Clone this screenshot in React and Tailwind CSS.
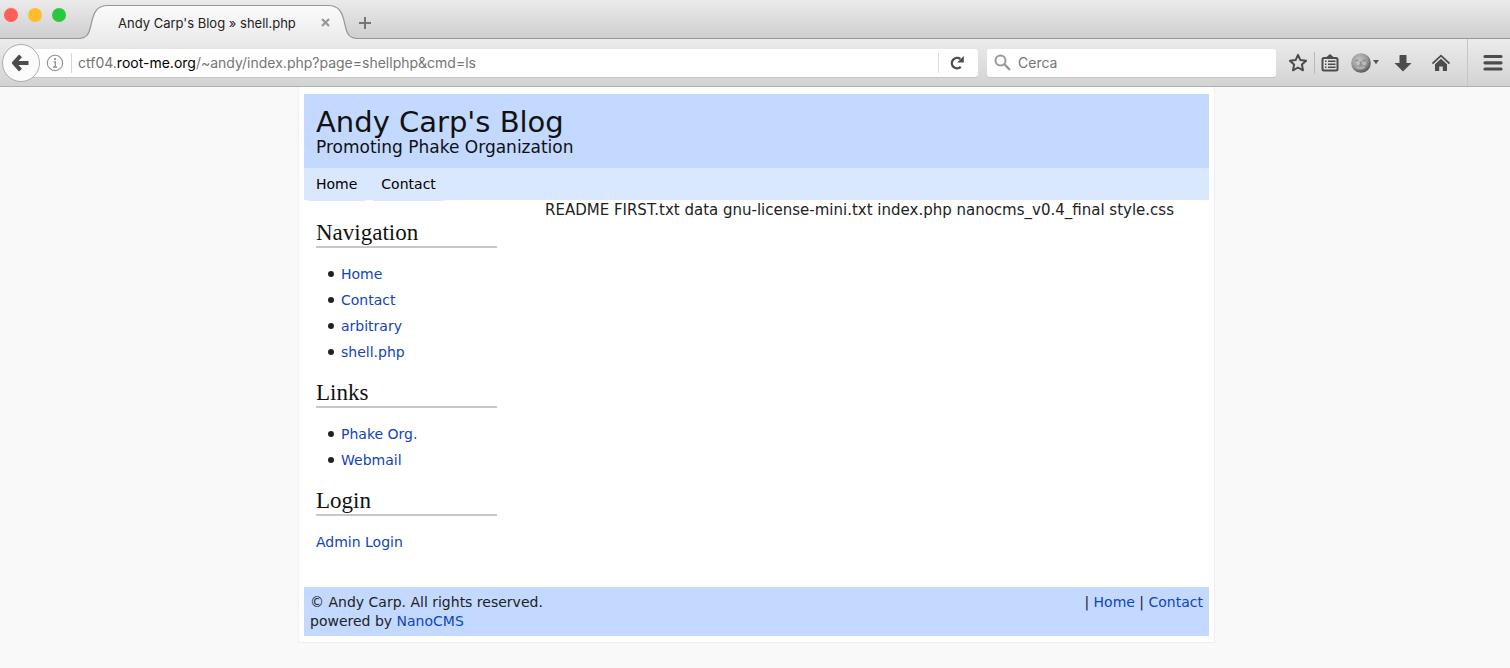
import React from "react";

const blogLink = "text-[#1144bb] hover:underline";

function TabStrip() {
  return (
    <div className="relative flex h-[39px] items-end border-b border-[#979797] bg-gradient-to-b from-[#ebebeb] to-[#cfcfcf]">
      <div className="flex h-full w-[78px] gap-[10px] pl-1 pt-2">
        <button aria-label="Close window" className="size-[14px] rounded-full bg-[#ff5f57]" />
        <button aria-label="Minimize window" className="size-[14px] rounded-full bg-[#ffbd2e]" />
        <button aria-label="Zoom window" className="size-[14px] rounded-full bg-[#28c940]" />
      </div>
      <div className="relative -mb-px flex h-[35px] w-[280px] items-center pl-[40px] pr-[23px] pt-[2px]">
        <svg className="absolute left-0 top-0" width="280" height="35" viewBox="0 0 280 35" aria-hidden="true">
          <defs>
            <linearGradient id="tabFill" x1="0" y1="0" x2="0" y2="1">
              <stop offset="0" stopColor="#fbfbfb" />
              <stop offset="1" stopColor="#ececec" />
            </linearGradient>
          </defs>
          <path
            d="M0 34.5C9 34.5 11 30 13 21C15.500 8 19 1.500 30 1.500H250C261 1.500 264.500 8 267 21C269 30 271 34.500 280 34.500V35H0Z"
            fill="url(#tabFill)"
          />
          <path
            d="M0 34.5C9 34.5 11 30 13 21C15.500 8 19 1.500 30 1.500H250C261 1.500 264.500 8 267 21C269 30 271 34.500 280 34.500"
            fill="none"
            stroke="#979797"
            strokeWidth="1.2"
          />
        </svg>
        <span className="relative flex-1 whitespace-nowrap text-[13px] leading-5 text-[#222]">
          Andy Carp's Blog » shell.php
        </span>
        <button aria-label="Close tab" className="relative p-1">
          <svg width="11" height="11" viewBox="0 0 11 11">
            <path d="M2 2L9 9M9 2L2 9" stroke="#979797" strokeWidth="2.2" />
          </svg>
        </button>
      </div>
      <button aria-label="New tab" className="mb-2">
        <svg width="14" height="14" viewBox="0 0 14 14">
          <path d="M7 1V13M1 7H13" stroke="#757575" strokeWidth="2" />
        </svg>
      </button>
    </div>
  );
}

function Toolbar() {
  return (
    <div className="flex h-12 items-center border-b border-[#b0b0b0] bg-gradient-to-b from-[#ececec] to-[#d3d3d3] pl-[2px]">
      <button
        aria-label="Back"
        className="z-10 flex size-[38px] shrink-0 items-center justify-center rounded-full border border-[#adadad] bg-[#fbfbfb]"
      >
        <svg width="18" height="18" viewBox="0 0 18 18">
          <path d="M8.500 1.800L2 9L8.500 16.200M2.500 9H16.500" fill="none" stroke="#4c4c4c" strokeWidth="4" strokeLinejoin="round" />
        </svg>
      </button>
      <div className="-ml-2 flex h-7 flex-1 items-center rounded-r-[3px] bg-white pl-[14px] shadow-[0_1px_0_#c4c4c4]">
        <button aria-label="Site information">
          <svg width="18" height="18" viewBox="0 0 18 18">
            <circle cx="9" cy="9" r="7.700" fill="none" stroke="#919191" strokeWidth="1.100" />
            <path d="M7.500 7.800H9.300V13M7 13H11.200" fill="none" stroke="#919191" strokeWidth="1.300" />
            <circle cx="9" cy="5.200" r="1.100" fill="#919191" />
          </svg>
        </button>
        <div className="ml-[7px] h-5 w-px bg-[#d5d5d5]" />
        <a href="#address" aria-label="Address" className="ml-[6px] flex-1 whitespace-nowrap text-[14px] leading-5 text-[#757575]">
          ctf04.<span className="text-black">root-me.org</span>/~andy/index.php?page=shellphp&amp;cmd=ls
        </a>
        <div className="h-5 w-px bg-[#dcdcdc]" />
        <button aria-label="Reload" className="flex w-[39px] justify-center pr-[3px]">
          <svg width="16" height="16" viewBox="0 0 16 16">
            <path d="M11.700 11.800A5.200 5.200 0 1 1 11.300 4" fill="none" stroke="#4c4c4c" strokeWidth="2.400" />
            <path d="M14.800 1V7.600H8.200Z" fill="#4c4c4c" />
          </svg>
        </button>
      </div>
      <label className="ml-[9px] flex h-7 w-[289px] items-center gap-[7px] rounded-[3px] bg-white pl-[7px] shadow-[0_1px_0_#c4c4c4]">
        <svg width="17" height="17" viewBox="0 0 17 17" aria-hidden="true">
          <circle cx="6.500" cy="6.500" r="5" fill="none" stroke="#999" strokeWidth="2" />
          <path d="M10.200 10.200L16 16" stroke="#999" strokeWidth="2.400" />
        </svg>
        <input
          aria-label="Search"
          className="h-7 min-w-0 flex-1 text-[14px] outline-none placeholder:text-[#757575]"
          placeholder="Cerca"
        />
      </label>
      <button aria-label="Bookmark this page" className="ml-3">
        <svg width="20" height="20" viewBox="0 0 20 20">
          <path
            d="M10 1.900L12.400 7.100L18.100 7.800L13.900 11.600L15 17.300L10 14.500L5 17.300L6.100 11.600L1.900 7.800L7.600 7.100Z"
            fill="none"
            stroke="#4c4c4c"
            strokeWidth="2"
            strokeLinejoin="round"
          />
        </svg>
      </button>
      <div className="ml-[6px] h-[22px] w-px bg-[#bababa]" />
      <button aria-label="Bookmarks" className="ml-[6px]">
        <svg width="18" height="18" viewBox="0 0 18 18">
          <path d="M5 3.500L9 0L13 3.500Z" fill="#4c4c4c" />
          <rect x="1.500" y="4" width="15" height="12.500" rx="1.500" fill="none" stroke="#4c4c4c" strokeWidth="2" />
          <path d="M4 7.300H5.500M4 10.300H5.500M4 13.300H5.500M7 7.300H14.500M7 10.300H14.500M7 13.300H14.500" stroke="#4c4c4c" strokeWidth="1.500" />
        </svg>
      </button>
      <button aria-label="Extension" className="ml-3 flex items-center">
        <svg width="28" height="22" viewBox="0 0 28 22">
          <defs>
            <radialGradient id="faceFill" cx="0.400" cy="0.350" r="0.700">
              <stop offset="0" stopColor="#c4c4c4" />
              <stop offset="0.600" stopColor="#9a9a9a" />
              <stop offset="1" stopColor="#484848" />
            </radialGradient>
          </defs>
          <circle cx="10" cy="11" r="9.800" fill="url(#faceFill)" />
          <path d="M4 8.500L7.500 8.200M11.500 8.500L15 8.200M10 9.500L9 13H11" fill="none" stroke="#8a8a8a" strokeWidth="1.200" />
          <path d="M5.500 15.500Q9.500 17 13.500 15.200" fill="none" stroke="#b8b8b8" strokeWidth="1.500" />
          <circle cx="7" cy="11.500" r="1.600" fill="#c5c5c5" />
          <circle cx="13.500" cy="11.500" r="1.600" fill="#bdbdbd" />
          <path d="M22 8H28L25 12.300Z" fill="#555" />
        </svg>
      </button>
      <button aria-label="Downloads" className="ml-[15px]">
        <svg width="18" height="18" viewBox="0 0 18 18">
          <path d="M5.500 1.500Q5.500 1 6 1H12Q12.500 1 12.500 1.500V9H17.500L9 17.500L0.500 9H5.500Z" fill="#4c4c4c" />
        </svg>
      </button>
      <button aria-label="Home page" className="ml-5">
        <svg width="18" height="18" viewBox="0 0 18 18">
          <path d="M0.500 9.500L9 1.700L17.500 9.500" fill="none" stroke="#4c4c4c" strokeWidth="1.700" />
          <path d="M3 10.300L9 4.800L15 10.300V17H10.800V12.500H7.200V17H3Z" fill="#4c4c4c" />
        </svg>
      </button>
      <div className="ml-[17px] h-full w-px bg-[#c6c6c6]" />
      <button aria-label="Open menu" className="ml-[15px] mr-[7px]">
        <svg width="20" height="18" viewBox="0 0 20 18">
          <path d="M2 2.500H18M2 8.800H18M2 15H18" stroke="#4c4c4c" strokeWidth="3.200" strokeLinecap="round" />
        </svg>
      </button>
    </div>
  );
}

function SideHeading({ children }) {
  return (
    <h2 className="border-b-2 border-[#c8c8c8] font-['Georgia','Liberation_Serif',serif] text-[23px] leading-[27px] text-[#111]">
      {children}
    </h2>
  );
}

function SideList({ items }) {
  return (
    <ul className="pb-[14px] pl-3 pt-[13px] leading-[26px]">
      {items.map((item) => (
        <li
          key={item}
          className="flex items-center gap-[7px] before:size-[6px] before:rounded-full before:bg-[#222] before:content-['']"
        >
          <a href="#page" className={blogLink}>{item}</a>
        </li>
      ))}
    </ul>
  );
}

function Blog() {
  return (
    <div className="flex justify-center pl-[3px] font-['Verdana','DejaVu_Sans',sans-serif] text-[14px] leading-[19px] text-[#222]">
      <div className="w-full max-w-[917px] border border-t-0 border-[#f0f0f0] bg-white px-[5px] pb-[6px] pt-[7px]">
        <header className="h-[74px] bg-[#c3d9ff] px-3 pt-3 text-[#111]">
          <h1 className="text-[29px] leading-8">Andy Carp's Blog</h1>
          <p className="-mt-px text-[17px] leading-5">Promoting Phake Organization</p>
        </header>
        <nav className="flex h-8 items-start gap-2 bg-[#d9e7ff] px-1 text-black">
          <a href="#home" className="h-[33px] bg-[#d9e7ff] px-2 leading-[33px]">Home</a>
          <a href="#contact" className="h-[33px] bg-[#d9e7ff] px-2 leading-[33px]">Contact</a>
        </nav>
        <div className="flex">
          <aside className="w-[193px] shrink-0 pb-[35px] pl-3 pt-[19px]">
            <SideHeading>Navigation</SideHeading>
            <SideList items={["Home", "Contact", "arbitrary", "shell.php"]} />
            <SideHeading>Links</SideHeading>
            <SideList items={["Phake Org.", "Webmail"]} />
            <SideHeading>Login</SideHeading>
            <p className="pt-[17px]">
              <a href="#login" className={blogLink}>Admin Login</a>
            </p>
          </aside>
          <main className="min-w-0 flex-1 pl-12 pt-px text-[15px]">
            README FIRST.txt data gnu-license-mini.txt index.php nanocms_v0.4_final style.css
          </main>
        </div>
        <footer className="flex justify-between bg-[#c3d9ff] px-[6px] pb-[5px] pt-[6px]">
          <p>
            © Andy Carp. All rights reserved.
            <br />
            powered by <a href="#nanocms" className={blogLink}>NanoCMS</a>
          </p>
          <p>
            | <a href="#home" className={blogLink}>Home</a> | <a href="#contact" className={blogLink}>Contact</a>
          </p>
        </footer>
      </div>
    </div>
  );
}

export default function App() {
  return (
    <div className="min-h-screen bg-[#f9f9f9] font-['Inter',sans-serif]">
      <TabStrip />
      <Toolbar />
      <Blog />
    </div>
  );
}
